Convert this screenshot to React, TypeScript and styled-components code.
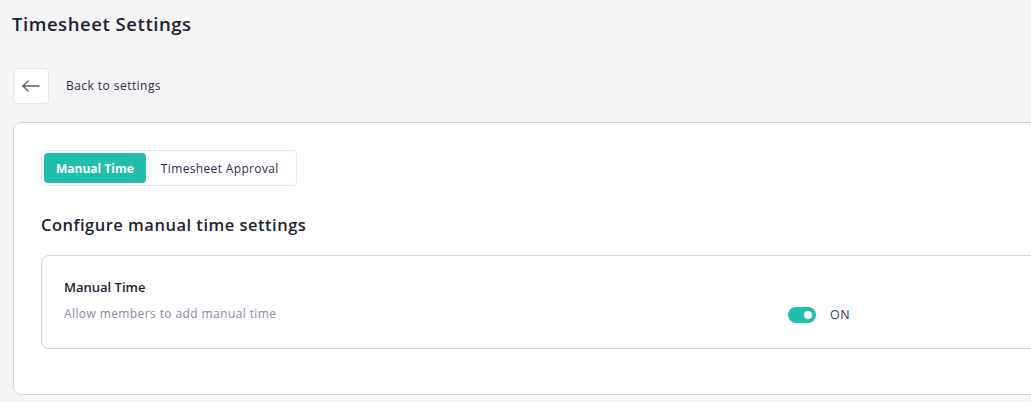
import React, { useState } from 'react';
import styled, { createGlobalStyle } from 'styled-components';

const GlobalStyle = createGlobalStyle`
  html, body {
    margin: 0;
    padding: 0;
    overflow: hidden;
    background: #f5f5f5;
    font-family: 'Open Sans', 'DejaVu Sans', sans-serif;
    color: #1f1f33;
  }
`;

const Page = styled.div`
  padding: 12px 0 0 12px;
  width: 1600px;
`;

const Title = styled.h1`
  margin: 0;
  font-size: 18.5px;
  font-weight: 600;
  letter-spacing: 0.55px;
  line-height: 24px;
  color: #1f1f33;
`;

const BackRow = styled.div`
  display: flex;
  align-items: center;
  gap: 17px;
  margin: 32px 0 18px 1px;
`;

const BackButton = styled.button`
  width: 36px;
  height: 36px;
  display: flex;
  align-items: center;
  justify-content: center;
  background: #fff;
  border: 1px solid #e4e6ec;
  border-radius: 4px;
  padding: 0;
  cursor: pointer;
  color: #5a5a66;
`;

const BackLabel = styled.span`
  font-size: 12px;
  font-weight: 500;
  letter-spacing: 0.45px;
  line-height: 16px;
  margin-top: -1px;
  color: #2c2c48;
`;

const Card = styled.section`
  margin-left: 1px;
  width: 1550px;
  background: #fff;
  border: 1px solid #c9d4e8;
  border-radius: 8px;
  padding: 27px 27px 45px 27px;
  box-sizing: border-box;
`;

const Tabs = styled.div`
  display: inline-flex;
  padding: 2px;
  border: 1px solid #e6e8ee;
  border-radius: 5px;
  background: #fff;
`;

const Tab = styled.button<{ active?: boolean }>`
  height: 30px;
  padding: 0 ${p => (p.active ? '12px' : '15px')};
  border: none;
  border-radius: 4px;
  font-family: inherit;
  font-size: 12px;
  font-weight: ${p => (p.active ? 700 : 500)};
  letter-spacing: ${p => (p.active ? '0' : '0.35px')};
  background: ${p => (p.active ? '#21bfab' : 'transparent')};
  color: ${p => (p.active ? '#fff' : '#2c2c48')};
  cursor: pointer;
`;

const SectionHeading = styled.h2`
  margin: 27px 0 18px;
  font-size: 16.5px;
  font-weight: 600;
  letter-spacing: 0.5px;
  line-height: 24px;
  color: #1f1f33;
`;

const SettingBox = styled.div`
  display: grid;
  grid-template-columns: 1fr 1fr;
  align-items: start;
  border: 1px solid #c9d4e8;
  border-radius: 8px;
  padding: 22px 22px 25px;
`;

const SettingTitle = styled.div`
  font-size: 13px;
  font-weight: 600;
  color: #1f1f33;
  line-height: 18px;
`;

const SettingDesc = styled.div`
  margin-top: 10px;
  font-size: 12px;
  letter-spacing: 0.4px;
  color: #8a8ca2;
  line-height: 16px;
`;

const ToggleWrap = styled.label`
  display: flex;
  align-items: center;
  gap: 14px;
  margin-top: 28px;
  cursor: pointer;
`;

const Switch = styled.span<{ on: boolean }>`
  position: relative;
  width: 28px;
  height: 16px;
  border-radius: 8px;
  background: ${p => (p.on ? '#21bfab' : '#c9ccd6')};

  &::after {
    content: '';
    position: absolute;
    top: 4px;
    left: ${p => (p.on ? '16px' : '4px')};
    width: 8px;
    height: 8px;
    border-radius: 50%;
    background: #fff;
  }
`;

const ToggleText = styled.span`
  font-size: 12.5px;
  font-weight: 500;
  letter-spacing: 0.5px;
  color: #2c3a5a;
`;

const App: React.FC = () => {
  const [tab, setTab] = useState('manual');
  const [on, setOn] = useState(true);

  return (
    <>
      <GlobalStyle />
      <Page>
        <Title>Timesheet Settings</Title>
        <BackRow>
          <BackButton aria-label="Back">
            <svg width="20" height="20" viewBox="0 0 20 20" fill="none" stroke="currentColor" strokeWidth="1.4" strokeLinecap="round" strokeLinejoin="round">
              <line x1="2" y1="10" x2="18" y2="10" />
              <polyline points="7,5 2,10 7,15" />
            </svg>
          </BackButton>
          <BackLabel>Back to settings</BackLabel>
        </BackRow>
        <Card>
          <Tabs>
            <Tab active={tab === 'manual'} onClick={() => setTab('manual')}>Manual Time</Tab>
            <Tab active={tab === 'approval'} onClick={() => setTab('approval')}>Timesheet Approval</Tab>
          </Tabs>
          <SectionHeading>Configure manual time settings</SectionHeading>
          <SettingBox>
            <div>
              <SettingTitle>Manual Time</SettingTitle>
              <SettingDesc>Allow members to add manual time</SettingDesc>
            </div>
            <ToggleWrap onClick={() => setOn(!on)}>
              <Switch on={on} />
              <ToggleText>{on ? 'ON' : 'OFF'}</ToggleText>
            </ToggleWrap>
          </SettingBox>
        </Card>
      </Page>
    </>
  );
};

export default App;
